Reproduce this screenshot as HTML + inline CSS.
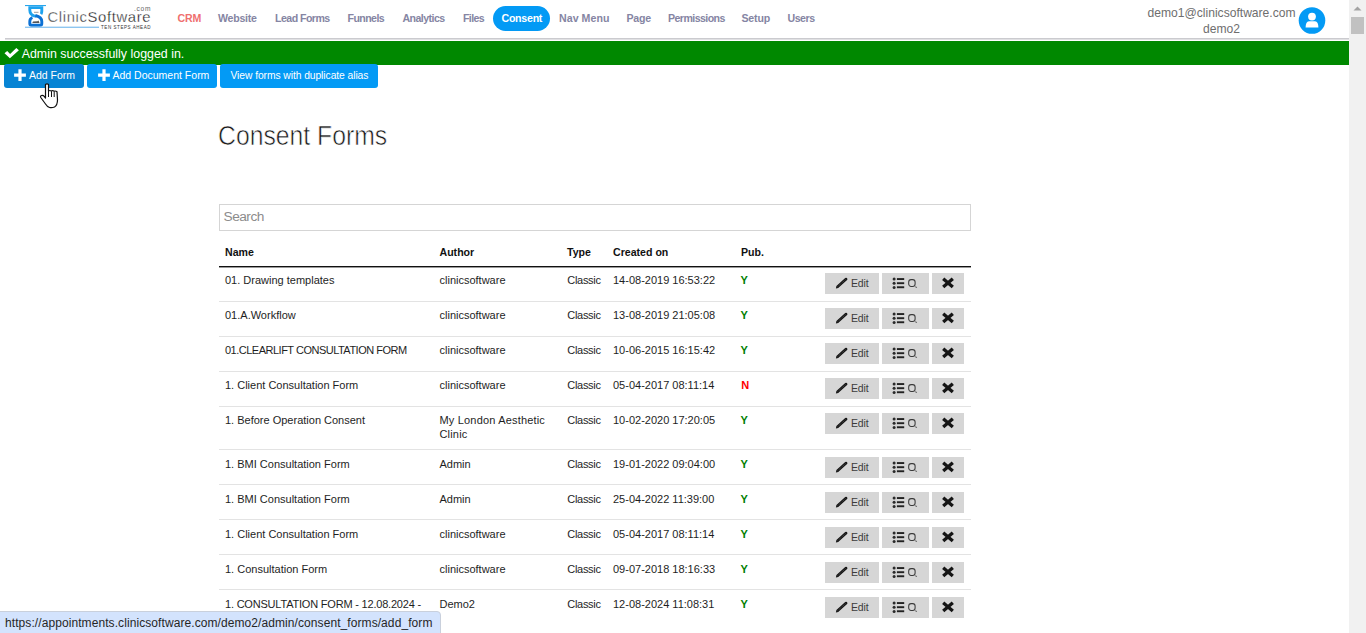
<!DOCTYPE html><html><head><meta charset="utf-8"><style>
*{box-sizing:border-box;margin:0;padding:0}
html,body{width:1366px;height:633px;overflow:hidden;background:#fff;font-family:"Liberation Sans",sans-serif;color:#212529}
.a{position:absolute;white-space:nowrap}
.nav{position:absolute;top:11px;font-size:10.6px;line-height:14px;font-weight:bold;color:#8585a3;white-space:nowrap;letter-spacing:-0.25px}
.th{position:absolute;top:245px;font-size:10.6px;line-height:14px;font-weight:bold;color:#111;white-space:nowrap}
.sep{position:absolute;left:219px;width:752px;height:1px;background:#e3e3e3}
.c{position:absolute;font-size:11px;color:#1e1e1e;white-space:nowrap;line-height:15px}
.y{position:absolute;left:740.5px;font-size:11px;line-height:15px;font-weight:bold;color:#008000}
.n{color:#ff0000;margin-left:0.8px}
.bt{position:absolute;height:21px;background:#d6d6d6}
.be{left:825px;width:54px}
.bl{left:882px;width:47px}
.bx{left:932px;width:32px}
.et{position:absolute;left:26px;top:3px;font-size:10.5px;line-height:14px;color:#3c3c3c;letter-spacing:-0.15px}
</style></head><body>
<div class="a" style="left:5px;top:38px;width:1344px;height:1px;background:#cbcbcf"></div>
<div class="a" style="left:5px;top:39px;width:1344px;height:1px;background:#e0e0e3"></div>
<svg class="a" style="left:0;top:0" width="160" height="36" viewBox="0 0 160 36">
<rect x="25" y="5" width="21" height="1.1" fill="#27a6ec"/>
<path d="M41 14.2 C41.6 13.4 41.8 12.5 41.8 11 L41.8 7.6 L29.8 7.6 L29.8 10 C29.8 14 33 16 36.4 16.4" fill="none" stroke="#1ea2ee" stroke-width="2.9"/>
<path d="M35.4 15.5 C39.5 16.5 41.8 18.5 41.8 21.5 L41.8 23.5 Q41.8 25.3 40 25.3 L31.6 25.3 Q29.8 25.3 29.8 23.5 L29.8 21.5 C29.8 19.5 30.8 18.2 32.4 17.5" fill="none" stroke="#0b70d4" stroke-width="2.9"/>
<rect x="34" y="11.8" width="4.5" height="1" fill="#9a9a9a"/>
<path d="M32.3 23 L33 21.6 L37.5 21.2 L38.5 20.6 L39.5 23 Z" fill="#555"/>
<rect x="25" y="26.6" width="74" height="1.4" fill="#8ec6f0"/>
<text x="47.5" y="21.5" font-family="Liberation Sans" font-size="14.8" fill="#3a3a3a" stroke="#fff" stroke-width="0.3" textLength="103" lengthAdjust="spacing">Clinic<tspan fill="#111">Software</tspan></text>
<text x="134" y="10.8" font-family="Liberation Sans" font-size="6.6" fill="#666" textLength="16.5" lengthAdjust="spacing">.com</text>
<text x="101" y="28.8" font-family="Liberation Sans" font-size="4.5" font-weight="normal" fill="#333" textLength="49.5" lengthAdjust="spacing">TEN STEPS AHEAD</text>
</svg>
<div class="nav" style="left:177.5px;letter-spacing:-0.2px;color:#ef6f6f">CRM</div>
<div class="nav" style="left:218px;letter-spacing:-0.25px">Website</div>
<div class="nav" style="left:275px;letter-spacing:-0.54px">Lead Forms</div>
<div class="nav" style="left:347.5px;letter-spacing:-0.57px">Funnels</div>
<div class="nav" style="left:402.5px;letter-spacing:-0.56px">Analytics</div>
<div class="nav" style="left:463px;letter-spacing:-0.6px">Files</div>
<div class="a" style="left:493px;top:6px;width:57px;height:25px;border-radius:12.5px;background:#039af5"></div>
<div class="nav" style="left:501.5px;color:#fff">Consent</div>
<div class="nav" style="left:559px;letter-spacing:0.06px">Nav Menu</div>
<div class="nav" style="left:626.5px;letter-spacing:-0.25px">Page</div>
<div class="nav" style="left:668px;letter-spacing:-0.56px">Permissions</div>
<div class="nav" style="left:741.5px;letter-spacing:-0.2px">Setup</div>
<div class="nav" style="left:787.5px;letter-spacing:-0.47px">Users</div>
<div class="a" style="left:1147.5px;top:5.5px;font-size:12.1px;line-height:15px;color:#6e6e6e">demo1@clinicsoftware.com</div>
<div class="a" style="left:1203px;top:22px;font-size:12.1px;line-height:15px;color:#6e6e6e">demo2</div>
<svg class="a" style="left:1298px;top:7px" width="28" height="28" viewBox="0 0 28 28"><circle cx="14" cy="13.5" r="13.3" fill="#039af5"/>
<circle cx="14" cy="9.6" r="3.9" fill="#fff"/><path d="M7.6 20.5 Q7.6 14.6 11 14.2 L17 14.2 Q20.4 14.6 20.4 20.5 Z" fill="#fff"/></svg>
<div class="a" style="left:0;top:41px;width:1349px;height:24px;background:#008800"></div>
<svg class="a" style="left:4px;top:47px" width="16" height="13" viewBox="0 0 16 13"><path d="M0.5 6.2 L3.2 3.9 L6.1 6.9 L12.3 1.0 L14.9 3.3 L5.9 11.3 Z" fill="#fff"/></svg>
<div class="a" style="left:21.7px;top:45.5px;font-size:12.4px;line-height:16px;color:#fff">Admin successfully logged in.</div>
<div class="a" style="left:4px;top:64px;width:80px;height:24px;border-radius:3px;background:#0784d4"></div>
<svg class="a" style="left:14px;top:69px" width="13" height="13" viewBox="0 0 13 13"><path d="M6 0.2 V12 M0.1 6.1 H11.9" stroke="#fff" stroke-width="3.2"/></svg>
<div class="a" style="left:29px;top:68px;font-size:10.5px;line-height:14px;color:#fff">Add Form</div>
<div class="a" style="left:87px;top:64px;width:130px;height:24px;border-radius:3px;background:#039af5"></div>
<svg class="a" style="left:97.5px;top:69px" width="13" height="13" viewBox="0 0 13 13"><path d="M6 0.2 V12 M0.1 6.1 H11.9" stroke="#fff" stroke-width="3.2"/></svg>
<div class="a" style="left:112.5px;top:68px;font-size:10.5px;line-height:14px;color:#fff">Add Document Form</div>
<div class="a" style="left:220px;top:64px;width:158px;height:24px;border-radius:3px;background:#039af5"></div>
<div class="a" style="left:230.5px;top:69px;font-size:10.3px;letter-spacing:-0.07px;line-height:14px;color:#fff">View forms with duplicate alias</div>
<svg class="a" style="left:38px;top:81.7px" width="22" height="28" viewBox="0 0 22 28">
<path d="M7.5 2.5 Q9 1.2 10.5 2.5 L10.5 9 Q12 8 13.2 9 Q14.8 8 16 9.2 Q17.6 8.6 19 9.8 L19.5 18 Q19.5 23 16.5 25 Q14 26 11.5 25.5 Q9 24.5 7.5 22 L2.8 15.5 Q2 14 3.5 13.5 Q5 13 6 14.2 L7.5 16 Z" fill="#fff" stroke="#111" stroke-width="1.2" stroke-linejoin="round"/>
<path d="M10.5 9 V15 M13.5 9.2 V15 M16.2 9.4 V15" stroke="#111" stroke-width="1"/></svg>
<div class="a" style="left:218px;top:120.5px;font-size:27px;line-height:30px;color:#1a1a1a;-webkit-text-stroke:0.6px #fff;transform:scaleX(0.917);transform-origin:0 0">Consent Forms</div>
<div class="a" style="left:219px;top:204px;width:752px;height:27px;border:1px solid #d5d5d5"></div>
<div class="a" style="left:223.5px;top:208.5px;font-size:13.7px;letter-spacing:-0.5px;line-height:16px;color:#8c8c8c">Search</div>
<div class="th" style="left:225px">Name</div>
<div class="th" style="left:439.5px">Author</div>
<div class="th" style="left:567px">Type</div>
<div class="th" style="left:613px">Created on</div>
<div class="th" style="left:741px">Pub.</div>
<div class="a" style="left:219px;top:266px;width:752px;height:1px;background:#111"></div>
<div class="a" style="left:219px;top:267px;width:752px;height:1px;background:#9a9a9a"></div>
<div class="c" style="left:225px;top:273px;letter-spacing:0px">01. Drawing templates</div>
<div class="c" style="left:439.5px;top:273px;letter-spacing:0px;line-height:14px">clinicsoftware</div>
<div class="c" style="left:567.3px;top:273px;letter-spacing:-0.3px">Classic</div>
<div class="c" style="left:613px;top:273px">14-08-2019 16:53:22</div>
<div class="y" style="top:273px">Y</div>
<div class="bt be" style="top:273px"><svg width="14" height="13" viewBox="0 0 14 13" style="position:absolute;left:10px;top:4px"><path d="M0.9 11.5 L1.4 9.0 L10.2 1.0 Q11.1 0.3 11.9 1.1 L12.2 1.5 Q12.8 2.3 12.1 3.0 L3.2 11.0 Z" fill="#161616"/><path d="M2.6 9.7 L10.6 2.5" stroke="#6a6a6a" stroke-width="0.7" stroke-dasharray="1 0.9"/></svg><span class="et">Edit</span></div>
<div class="bt bl" style="top:273px"><svg width="13" height="13" viewBox="0 0 13 13" style="position:absolute;left:10px;top:4px"><circle cx="2.1" cy="2" r="1.5" fill="#2a2a2a"/><circle cx="2.1" cy="6.2" r="1.5" fill="#2a2a2a"/><circle cx="2.1" cy="10.4" r="1.5" fill="#2a2a2a"/><rect x="4.9" y="1.1" width="7.3" height="1.9" fill="#222"/><rect x="4.9" y="5.25" width="7.3" height="1.9" fill="#222"/><rect x="4.9" y="9.3" width="7.3" height="1.9" fill="#222"/></svg><svg width="12" height="13" viewBox="0 0 12 13" style="position:absolute;left:25px;top:4px"><rect x="1.7" y="2.6" width="6.4" height="6.8" rx="2.4" fill="none" stroke="#3a3a3a" stroke-width="1.05"/><path d="M8.3 9.6 L9.8 10.6" stroke="#555" stroke-width="1.1"/></svg></div>
<div class="bt bx" style="top:273px"><svg width="13" height="13" viewBox="0 0 13 13" style="position:absolute;left:10px;top:4px"><path d="M1.2 1.7 L10.8 10.1 M10.8 1.7 L1.2 10.1" stroke="#151515" stroke-width="3.3"/></svg></div>
<div class="sep" style="top:301px"></div>
<div class="c" style="left:225px;top:308px;letter-spacing:0px">01.A.Workflow</div>
<div class="c" style="left:439.5px;top:308px;letter-spacing:0px;line-height:14px">clinicsoftware</div>
<div class="c" style="left:567.3px;top:308px;letter-spacing:-0.3px">Classic</div>
<div class="c" style="left:613px;top:308px">13-08-2019 21:05:08</div>
<div class="y" style="top:308px">Y</div>
<div class="bt be" style="top:308px"><svg width="14" height="13" viewBox="0 0 14 13" style="position:absolute;left:10px;top:4px"><path d="M0.9 11.5 L1.4 9.0 L10.2 1.0 Q11.1 0.3 11.9 1.1 L12.2 1.5 Q12.8 2.3 12.1 3.0 L3.2 11.0 Z" fill="#161616"/><path d="M2.6 9.7 L10.6 2.5" stroke="#6a6a6a" stroke-width="0.7" stroke-dasharray="1 0.9"/></svg><span class="et">Edit</span></div>
<div class="bt bl" style="top:308px"><svg width="13" height="13" viewBox="0 0 13 13" style="position:absolute;left:10px;top:4px"><circle cx="2.1" cy="2" r="1.5" fill="#2a2a2a"/><circle cx="2.1" cy="6.2" r="1.5" fill="#2a2a2a"/><circle cx="2.1" cy="10.4" r="1.5" fill="#2a2a2a"/><rect x="4.9" y="1.1" width="7.3" height="1.9" fill="#222"/><rect x="4.9" y="5.25" width="7.3" height="1.9" fill="#222"/><rect x="4.9" y="9.3" width="7.3" height="1.9" fill="#222"/></svg><svg width="12" height="13" viewBox="0 0 12 13" style="position:absolute;left:25px;top:4px"><rect x="1.7" y="2.6" width="6.4" height="6.8" rx="2.4" fill="none" stroke="#3a3a3a" stroke-width="1.05"/><path d="M8.3 9.6 L9.8 10.6" stroke="#555" stroke-width="1.1"/></svg></div>
<div class="bt bx" style="top:308px"><svg width="13" height="13" viewBox="0 0 13 13" style="position:absolute;left:10px;top:4px"><path d="M1.2 1.7 L10.8 10.1 M10.8 1.7 L1.2 10.1" stroke="#151515" stroke-width="3.3"/></svg></div>
<div class="sep" style="top:336px"></div>
<div class="c" style="left:225px;top:343px;letter-spacing:-0.5px">01.CLEARLIFT CONSULTATION FORM</div>
<div class="c" style="left:439.5px;top:343px;letter-spacing:0px;line-height:14px">clinicsoftware</div>
<div class="c" style="left:567.3px;top:343px;letter-spacing:-0.3px">Classic</div>
<div class="c" style="left:613px;top:343px">10-06-2015 16:15:42</div>
<div class="y" style="top:343px">Y</div>
<div class="bt be" style="top:343px"><svg width="14" height="13" viewBox="0 0 14 13" style="position:absolute;left:10px;top:4px"><path d="M0.9 11.5 L1.4 9.0 L10.2 1.0 Q11.1 0.3 11.9 1.1 L12.2 1.5 Q12.8 2.3 12.1 3.0 L3.2 11.0 Z" fill="#161616"/><path d="M2.6 9.7 L10.6 2.5" stroke="#6a6a6a" stroke-width="0.7" stroke-dasharray="1 0.9"/></svg><span class="et">Edit</span></div>
<div class="bt bl" style="top:343px"><svg width="13" height="13" viewBox="0 0 13 13" style="position:absolute;left:10px;top:4px"><circle cx="2.1" cy="2" r="1.5" fill="#2a2a2a"/><circle cx="2.1" cy="6.2" r="1.5" fill="#2a2a2a"/><circle cx="2.1" cy="10.4" r="1.5" fill="#2a2a2a"/><rect x="4.9" y="1.1" width="7.3" height="1.9" fill="#222"/><rect x="4.9" y="5.25" width="7.3" height="1.9" fill="#222"/><rect x="4.9" y="9.3" width="7.3" height="1.9" fill="#222"/></svg><svg width="12" height="13" viewBox="0 0 12 13" style="position:absolute;left:25px;top:4px"><rect x="1.7" y="2.6" width="6.4" height="6.8" rx="2.4" fill="none" stroke="#3a3a3a" stroke-width="1.05"/><path d="M8.3 9.6 L9.8 10.6" stroke="#555" stroke-width="1.1"/></svg></div>
<div class="bt bx" style="top:343px"><svg width="13" height="13" viewBox="0 0 13 13" style="position:absolute;left:10px;top:4px"><path d="M1.2 1.7 L10.8 10.1 M10.8 1.7 L1.2 10.1" stroke="#151515" stroke-width="3.3"/></svg></div>
<div class="sep" style="top:371px"></div>
<div class="c" style="left:225px;top:378px;letter-spacing:0px">1. Client Consultation Form</div>
<div class="c" style="left:439.5px;top:378px;letter-spacing:0px;line-height:14px">clinicsoftware</div>
<div class="c" style="left:567.3px;top:378px;letter-spacing:-0.3px">Classic</div>
<div class="c" style="left:613px;top:378px">05-04-2017 08:11:14</div>
<div class="y n" style="top:378px">N</div>
<div class="bt be" style="top:378px"><svg width="14" height="13" viewBox="0 0 14 13" style="position:absolute;left:10px;top:4px"><path d="M0.9 11.5 L1.4 9.0 L10.2 1.0 Q11.1 0.3 11.9 1.1 L12.2 1.5 Q12.8 2.3 12.1 3.0 L3.2 11.0 Z" fill="#161616"/><path d="M2.6 9.7 L10.6 2.5" stroke="#6a6a6a" stroke-width="0.7" stroke-dasharray="1 0.9"/></svg><span class="et">Edit</span></div>
<div class="bt bl" style="top:378px"><svg width="13" height="13" viewBox="0 0 13 13" style="position:absolute;left:10px;top:4px"><circle cx="2.1" cy="2" r="1.5" fill="#2a2a2a"/><circle cx="2.1" cy="6.2" r="1.5" fill="#2a2a2a"/><circle cx="2.1" cy="10.4" r="1.5" fill="#2a2a2a"/><rect x="4.9" y="1.1" width="7.3" height="1.9" fill="#222"/><rect x="4.9" y="5.25" width="7.3" height="1.9" fill="#222"/><rect x="4.9" y="9.3" width="7.3" height="1.9" fill="#222"/></svg><svg width="12" height="13" viewBox="0 0 12 13" style="position:absolute;left:25px;top:4px"><rect x="1.7" y="2.6" width="6.4" height="6.8" rx="2.4" fill="none" stroke="#3a3a3a" stroke-width="1.05"/><path d="M8.3 9.6 L9.8 10.6" stroke="#555" stroke-width="1.1"/></svg></div>
<div class="bt bx" style="top:378px"><svg width="13" height="13" viewBox="0 0 13 13" style="position:absolute;left:10px;top:4px"><path d="M1.2 1.7 L10.8 10.1 M10.8 1.7 L1.2 10.1" stroke="#151515" stroke-width="3.3"/></svg></div>
<div class="sep" style="top:406px"></div>
<div class="c" style="left:225px;top:413px;letter-spacing:0px">1. Before Operation Consent</div>
<div class="c" style="left:439.5px;top:413px;letter-spacing:0.18px;line-height:14px">My London Aesthetic<br>Clinic</div>
<div class="c" style="left:567.3px;top:413px;letter-spacing:-0.3px">Classic</div>
<div class="c" style="left:613px;top:413px">10-02-2020 17:20:05</div>
<div class="y" style="top:413px">Y</div>
<div class="bt be" style="top:413px"><svg width="14" height="13" viewBox="0 0 14 13" style="position:absolute;left:10px;top:4px"><path d="M0.9 11.5 L1.4 9.0 L10.2 1.0 Q11.1 0.3 11.9 1.1 L12.2 1.5 Q12.8 2.3 12.1 3.0 L3.2 11.0 Z" fill="#161616"/><path d="M2.6 9.7 L10.6 2.5" stroke="#6a6a6a" stroke-width="0.7" stroke-dasharray="1 0.9"/></svg><span class="et">Edit</span></div>
<div class="bt bl" style="top:413px"><svg width="13" height="13" viewBox="0 0 13 13" style="position:absolute;left:10px;top:4px"><circle cx="2.1" cy="2" r="1.5" fill="#2a2a2a"/><circle cx="2.1" cy="6.2" r="1.5" fill="#2a2a2a"/><circle cx="2.1" cy="10.4" r="1.5" fill="#2a2a2a"/><rect x="4.9" y="1.1" width="7.3" height="1.9" fill="#222"/><rect x="4.9" y="5.25" width="7.3" height="1.9" fill="#222"/><rect x="4.9" y="9.3" width="7.3" height="1.9" fill="#222"/></svg><svg width="12" height="13" viewBox="0 0 12 13" style="position:absolute;left:25px;top:4px"><rect x="1.7" y="2.6" width="6.4" height="6.8" rx="2.4" fill="none" stroke="#3a3a3a" stroke-width="1.05"/><path d="M8.3 9.6 L9.8 10.6" stroke="#555" stroke-width="1.1"/></svg></div>
<div class="bt bx" style="top:413px"><svg width="13" height="13" viewBox="0 0 13 13" style="position:absolute;left:10px;top:4px"><path d="M1.2 1.7 L10.8 10.1 M10.8 1.7 L1.2 10.1" stroke="#151515" stroke-width="3.3"/></svg></div>
<div class="sep" style="top:449px"></div>
<div class="c" style="left:225px;top:457px;letter-spacing:0px">1. BMI Consultation Form</div>
<div class="c" style="left:439.5px;top:457px;letter-spacing:0px;line-height:14px">Admin</div>
<div class="c" style="left:567.3px;top:457px;letter-spacing:-0.3px">Classic</div>
<div class="c" style="left:613px;top:457px">19-01-2022 09:04:00</div>
<div class="y" style="top:457px">Y</div>
<div class="bt be" style="top:457px"><svg width="14" height="13" viewBox="0 0 14 13" style="position:absolute;left:10px;top:4px"><path d="M0.9 11.5 L1.4 9.0 L10.2 1.0 Q11.1 0.3 11.9 1.1 L12.2 1.5 Q12.8 2.3 12.1 3.0 L3.2 11.0 Z" fill="#161616"/><path d="M2.6 9.7 L10.6 2.5" stroke="#6a6a6a" stroke-width="0.7" stroke-dasharray="1 0.9"/></svg><span class="et">Edit</span></div>
<div class="bt bl" style="top:457px"><svg width="13" height="13" viewBox="0 0 13 13" style="position:absolute;left:10px;top:4px"><circle cx="2.1" cy="2" r="1.5" fill="#2a2a2a"/><circle cx="2.1" cy="6.2" r="1.5" fill="#2a2a2a"/><circle cx="2.1" cy="10.4" r="1.5" fill="#2a2a2a"/><rect x="4.9" y="1.1" width="7.3" height="1.9" fill="#222"/><rect x="4.9" y="5.25" width="7.3" height="1.9" fill="#222"/><rect x="4.9" y="9.3" width="7.3" height="1.9" fill="#222"/></svg><svg width="12" height="13" viewBox="0 0 12 13" style="position:absolute;left:25px;top:4px"><rect x="1.7" y="2.6" width="6.4" height="6.8" rx="2.4" fill="none" stroke="#3a3a3a" stroke-width="1.05"/><path d="M8.3 9.6 L9.8 10.6" stroke="#555" stroke-width="1.1"/></svg></div>
<div class="bt bx" style="top:457px"><svg width="13" height="13" viewBox="0 0 13 13" style="position:absolute;left:10px;top:4px"><path d="M1.2 1.7 L10.8 10.1 M10.8 1.7 L1.2 10.1" stroke="#151515" stroke-width="3.3"/></svg></div>
<div class="sep" style="top:484px"></div>
<div class="c" style="left:225px;top:492px;letter-spacing:0px">1. BMI Consultation Form</div>
<div class="c" style="left:439.5px;top:492px;letter-spacing:0px;line-height:14px">Admin</div>
<div class="c" style="left:567.3px;top:492px;letter-spacing:-0.3px">Classic</div>
<div class="c" style="left:613px;top:492px">25-04-2022 11:39:00</div>
<div class="y" style="top:492px">Y</div>
<div class="bt be" style="top:492px"><svg width="14" height="13" viewBox="0 0 14 13" style="position:absolute;left:10px;top:4px"><path d="M0.9 11.5 L1.4 9.0 L10.2 1.0 Q11.1 0.3 11.9 1.1 L12.2 1.5 Q12.8 2.3 12.1 3.0 L3.2 11.0 Z" fill="#161616"/><path d="M2.6 9.7 L10.6 2.5" stroke="#6a6a6a" stroke-width="0.7" stroke-dasharray="1 0.9"/></svg><span class="et">Edit</span></div>
<div class="bt bl" style="top:492px"><svg width="13" height="13" viewBox="0 0 13 13" style="position:absolute;left:10px;top:4px"><circle cx="2.1" cy="2" r="1.5" fill="#2a2a2a"/><circle cx="2.1" cy="6.2" r="1.5" fill="#2a2a2a"/><circle cx="2.1" cy="10.4" r="1.5" fill="#2a2a2a"/><rect x="4.9" y="1.1" width="7.3" height="1.9" fill="#222"/><rect x="4.9" y="5.25" width="7.3" height="1.9" fill="#222"/><rect x="4.9" y="9.3" width="7.3" height="1.9" fill="#222"/></svg><svg width="12" height="13" viewBox="0 0 12 13" style="position:absolute;left:25px;top:4px"><rect x="1.7" y="2.6" width="6.4" height="6.8" rx="2.4" fill="none" stroke="#3a3a3a" stroke-width="1.05"/><path d="M8.3 9.6 L9.8 10.6" stroke="#555" stroke-width="1.1"/></svg></div>
<div class="bt bx" style="top:492px"><svg width="13" height="13" viewBox="0 0 13 13" style="position:absolute;left:10px;top:4px"><path d="M1.2 1.7 L10.8 10.1 M10.8 1.7 L1.2 10.1" stroke="#151515" stroke-width="3.3"/></svg></div>
<div class="sep" style="top:519px"></div>
<div class="c" style="left:225px;top:527px;letter-spacing:0px">1. Client Consultation Form</div>
<div class="c" style="left:439.5px;top:527px;letter-spacing:0px;line-height:14px">clinicsoftware</div>
<div class="c" style="left:567.3px;top:527px;letter-spacing:-0.3px">Classic</div>
<div class="c" style="left:613px;top:527px">05-04-2017 08:11:14</div>
<div class="y" style="top:527px">Y</div>
<div class="bt be" style="top:527px"><svg width="14" height="13" viewBox="0 0 14 13" style="position:absolute;left:10px;top:4px"><path d="M0.9 11.5 L1.4 9.0 L10.2 1.0 Q11.1 0.3 11.9 1.1 L12.2 1.5 Q12.8 2.3 12.1 3.0 L3.2 11.0 Z" fill="#161616"/><path d="M2.6 9.7 L10.6 2.5" stroke="#6a6a6a" stroke-width="0.7" stroke-dasharray="1 0.9"/></svg><span class="et">Edit</span></div>
<div class="bt bl" style="top:527px"><svg width="13" height="13" viewBox="0 0 13 13" style="position:absolute;left:10px;top:4px"><circle cx="2.1" cy="2" r="1.5" fill="#2a2a2a"/><circle cx="2.1" cy="6.2" r="1.5" fill="#2a2a2a"/><circle cx="2.1" cy="10.4" r="1.5" fill="#2a2a2a"/><rect x="4.9" y="1.1" width="7.3" height="1.9" fill="#222"/><rect x="4.9" y="5.25" width="7.3" height="1.9" fill="#222"/><rect x="4.9" y="9.3" width="7.3" height="1.9" fill="#222"/></svg><svg width="12" height="13" viewBox="0 0 12 13" style="position:absolute;left:25px;top:4px"><rect x="1.7" y="2.6" width="6.4" height="6.8" rx="2.4" fill="none" stroke="#3a3a3a" stroke-width="1.05"/><path d="M8.3 9.6 L9.8 10.6" stroke="#555" stroke-width="1.1"/></svg></div>
<div class="bt bx" style="top:527px"><svg width="13" height="13" viewBox="0 0 13 13" style="position:absolute;left:10px;top:4px"><path d="M1.2 1.7 L10.8 10.1 M10.8 1.7 L1.2 10.1" stroke="#151515" stroke-width="3.3"/></svg></div>
<div class="sep" style="top:554px"></div>
<div class="c" style="left:225px;top:562px;letter-spacing:0px">1. Consultation Form</div>
<div class="c" style="left:439.5px;top:562px;letter-spacing:0px;line-height:14px">clinicsoftware</div>
<div class="c" style="left:567.3px;top:562px;letter-spacing:-0.3px">Classic</div>
<div class="c" style="left:613px;top:562px">09-07-2018 18:16:33</div>
<div class="y" style="top:562px">Y</div>
<div class="bt be" style="top:562px"><svg width="14" height="13" viewBox="0 0 14 13" style="position:absolute;left:10px;top:4px"><path d="M0.9 11.5 L1.4 9.0 L10.2 1.0 Q11.1 0.3 11.9 1.1 L12.2 1.5 Q12.8 2.3 12.1 3.0 L3.2 11.0 Z" fill="#161616"/><path d="M2.6 9.7 L10.6 2.5" stroke="#6a6a6a" stroke-width="0.7" stroke-dasharray="1 0.9"/></svg><span class="et">Edit</span></div>
<div class="bt bl" style="top:562px"><svg width="13" height="13" viewBox="0 0 13 13" style="position:absolute;left:10px;top:4px"><circle cx="2.1" cy="2" r="1.5" fill="#2a2a2a"/><circle cx="2.1" cy="6.2" r="1.5" fill="#2a2a2a"/><circle cx="2.1" cy="10.4" r="1.5" fill="#2a2a2a"/><rect x="4.9" y="1.1" width="7.3" height="1.9" fill="#222"/><rect x="4.9" y="5.25" width="7.3" height="1.9" fill="#222"/><rect x="4.9" y="9.3" width="7.3" height="1.9" fill="#222"/></svg><svg width="12" height="13" viewBox="0 0 12 13" style="position:absolute;left:25px;top:4px"><rect x="1.7" y="2.6" width="6.4" height="6.8" rx="2.4" fill="none" stroke="#3a3a3a" stroke-width="1.05"/><path d="M8.3 9.6 L9.8 10.6" stroke="#555" stroke-width="1.1"/></svg></div>
<div class="bt bx" style="top:562px"><svg width="13" height="13" viewBox="0 0 13 13" style="position:absolute;left:10px;top:4px"><path d="M1.2 1.7 L10.8 10.1 M10.8 1.7 L1.2 10.1" stroke="#151515" stroke-width="3.3"/></svg></div>
<div class="sep" style="top:589px"></div>
<div class="c" style="left:225px;top:597px;letter-spacing:-0.2px">1. CONSULTATION FORM - 12.08.2024 -</div>
<div class="c" style="left:439.5px;top:597px;letter-spacing:0px;line-height:14px">Demo2</div>
<div class="c" style="left:567.3px;top:597px;letter-spacing:-0.3px">Classic</div>
<div class="c" style="left:613px;top:597px">12-08-2024 11:08:31</div>
<div class="y" style="top:597px">Y</div>
<div class="bt be" style="top:597px"><svg width="14" height="13" viewBox="0 0 14 13" style="position:absolute;left:10px;top:4px"><path d="M0.9 11.5 L1.4 9.0 L10.2 1.0 Q11.1 0.3 11.9 1.1 L12.2 1.5 Q12.8 2.3 12.1 3.0 L3.2 11.0 Z" fill="#161616"/><path d="M2.6 9.7 L10.6 2.5" stroke="#6a6a6a" stroke-width="0.7" stroke-dasharray="1 0.9"/></svg><span class="et">Edit</span></div>
<div class="bt bl" style="top:597px"><svg width="13" height="13" viewBox="0 0 13 13" style="position:absolute;left:10px;top:4px"><circle cx="2.1" cy="2" r="1.5" fill="#2a2a2a"/><circle cx="2.1" cy="6.2" r="1.5" fill="#2a2a2a"/><circle cx="2.1" cy="10.4" r="1.5" fill="#2a2a2a"/><rect x="4.9" y="1.1" width="7.3" height="1.9" fill="#222"/><rect x="4.9" y="5.25" width="7.3" height="1.9" fill="#222"/><rect x="4.9" y="9.3" width="7.3" height="1.9" fill="#222"/></svg><svg width="12" height="13" viewBox="0 0 12 13" style="position:absolute;left:25px;top:4px"><rect x="1.7" y="2.6" width="6.4" height="6.8" rx="2.4" fill="none" stroke="#3a3a3a" stroke-width="1.05"/><path d="M8.3 9.6 L9.8 10.6" stroke="#555" stroke-width="1.1"/></svg></div>
<div class="bt bx" style="top:597px"><svg width="13" height="13" viewBox="0 0 13 13" style="position:absolute;left:10px;top:4px"><path d="M1.2 1.7 L10.8 10.1 M10.8 1.7 L1.2 10.1" stroke="#151515" stroke-width="3.3"/></svg></div>
<div class="a" style="left:1349px;top:0;width:17px;height:633px;background:#f1f1f1"></div>
<svg class="a" style="left:1349px;top:0" width="17" height="17" viewBox="0 0 17 17"><path d="M4.5 10.5 L8.5 6.5 L12.5 10.5 Z" fill="#a3a3a3"/></svg>
<div class="a" style="left:1351px;top:17px;width:13px;height:17px;background:#c1c1c1"></div>
<div class="a" style="left:-1px;top:611px;width:442px;height:23px;background:#d3e3fd;border:1px solid #c9d0dc;border-top-right-radius:4px"></div>
<div class="a" style="left:5px;top:616px;font-size:12px;letter-spacing:0.08px;line-height:15px;color:#262626">https://appointments.clinicsoftware.com/demo2/admin/consent_forms/add_form</div>
</body></html>
